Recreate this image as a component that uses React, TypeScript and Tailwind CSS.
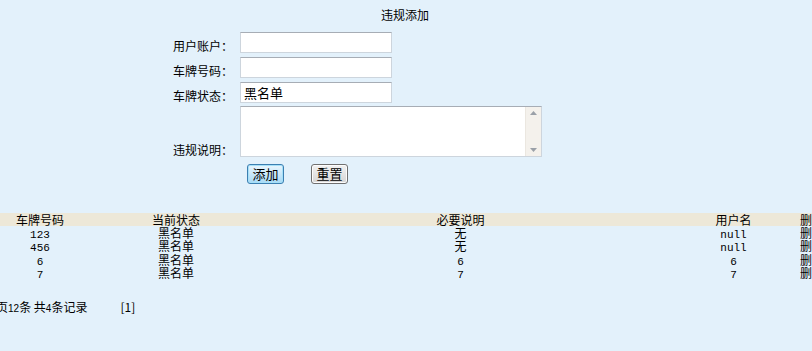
import React from "react";

const rows = [
  { plate: "123", state: "黑名单", note: "无", user: "null" },
  { plate: "456", state: "黑名单", note: "无", user: "null" },
  { plate: "6", state: "黑名单", note: "6", user: "6" },
  { plate: "7", state: "黑名单", note: "7", user: "7" },
];

const cjk = "font-['Noto_Sans_CJK_SC','Noto_Sans',sans-serif]";
const mono = "font-['Liberation_Mono',monospace] text-[11px]";
const num = "font-['Liberation_Sans',sans-serif] text-[10px]";

function isAscii(s: string) {
  return /^[\x00-\x7f]+$/.test(s);
}

function Cell({ text, className }: { text: string; className: string }) {
  return (
    <div className={className}>
      <span className={isAscii(text) ? mono : ""}>{text}</span>
    </div>
  );
}

function Input({ value }: { value?: string }) {
  return (
    <div className="w-[152px] h-[21px] bg-white border border-[#cdd5dd] border-t-[#a7adb5] flex items-center pl-[3px] text-[13px] leading-[15px] text-black">
      {value}
    </div>
  );
}

export default function App() {
  return (
    <div className={`w-[812px] h-[351px] overflow-hidden bg-[#e3f1fb] text-[12px] text-black ${cjk}`}>
      {/* title */}
      <div className="pt-[8px] leading-[14px] text-center pr-[2px]">违规添加</div>

      {/* form */}
      <div className="mt-[8px] ml-[160px] flex flex-col">
        {[
          { label: "用户账户：", value: "" },
          { label: "车牌号码：", value: "" },
          { label: "车牌状态：", value: "黑名单" },
        ].map((r) => (
          <div key={r.label} className="flex h-[25px]">
            <div className="w-[74px] text-right pr-[1px] pt-[9px] leading-[14px]">{r.label}</div>
            <div className="ml-[6px] pt-[2px]">
              <Input value={r.value} />
            </div>
          </div>
        ))}
        <div className="flex h-[56px]">
          <div className="w-[74px] text-right pr-[1px] pt-[38px] leading-[14px]">违规说明：</div>
          <div className="ml-[6px] pt-[1px]">
            <div className="w-[302px] h-[51px] bg-white border border-[#cdd5dd] border-t-[#a7adb5] flex justify-end">
              <div className="w-[16px] h-full bg-[#f4f1ec] border-l border-[#ebe7e0] flex flex-col items-center justify-between py-[4px]">
                <svg width="7" height="4" viewBox="0 0 7 4">
                  <path d="M0 4 L3.5 0 L7 4 Z" fill="#9aa0a8" />
                </svg>
                <svg width="7" height="4" viewBox="0 0 7 4">
                  <path d="M0 0 L3.5 4 L7 0 Z" fill="#9aa0a8" />
                </svg>
              </div>
            </div>
          </div>
        </div>
        <div className="flex ml-[87px] mt-[3px] gap-[27px]">
          <button className="w-[37px] h-[20px] rounded-[3px] border border-[#3c7fb1] bg-gradient-to-b from-[#eaf6fd] to-[#a7d9f5] shadow-[inset_0_0_0_1px_#a6e0f8] text-[13px] leading-[16px] text-black flex items-center justify-center">
            添加
          </button>
          <button className="w-[37px] h-[20px] rounded-[3px] border border-[#707070] bg-gradient-to-b from-[#f2f2f2] to-[#d6d6d6] shadow-[inset_0_0_0_1px_#fcfcfc] text-[13px] leading-[16px] text-black flex items-center justify-center">
            重置
          </button>
        </div>
      </div>

      {/* table */}
      <div className="mt-[29px] w-[812px] overflow-hidden">
        <div className="flex h-[13px] leading-[13px] bg-[#ede8d8] whitespace-nowrap">
          <div className="w-[80px] shrink-0 text-center">车牌号码</div>
          <div className="w-[192px] shrink-0 text-center">当前状态</div>
          <div className="w-[377px] shrink-0 text-center">必要说明</div>
          <div className="w-[151px] shrink-0 pl-[18px] text-center">用户名</div>
          <div className="shrink-0">删除</div>
        </div>
        {rows.map((r, i) => (
          <div key={i} className="flex h-[13.4px] leading-[13.4px] whitespace-nowrap">
            <Cell text={r.plate} className="w-[80px] shrink-0 text-center" />
            <Cell text={r.state} className="w-[192px] shrink-0 text-center" />
            <Cell text={r.note} className="w-[377px] shrink-0 text-center" />
            <Cell text={r.user} className="w-[151px] shrink-0 pl-[18px] text-center" />
            <div className="shrink-0">删除</div>
          </div>
        ))}
      </div>

      {/* pagination */}
      <div className="mt-[20px] ml-[-16px] flex leading-[14px] whitespace-nowrap">
        <span>
          每页<span className={num}>12</span>条 共<span className={num}>4</span>条记录
        </span>
        <span className="ml-[33px]">[1]</span>
      </div>
    </div>
  );
}
